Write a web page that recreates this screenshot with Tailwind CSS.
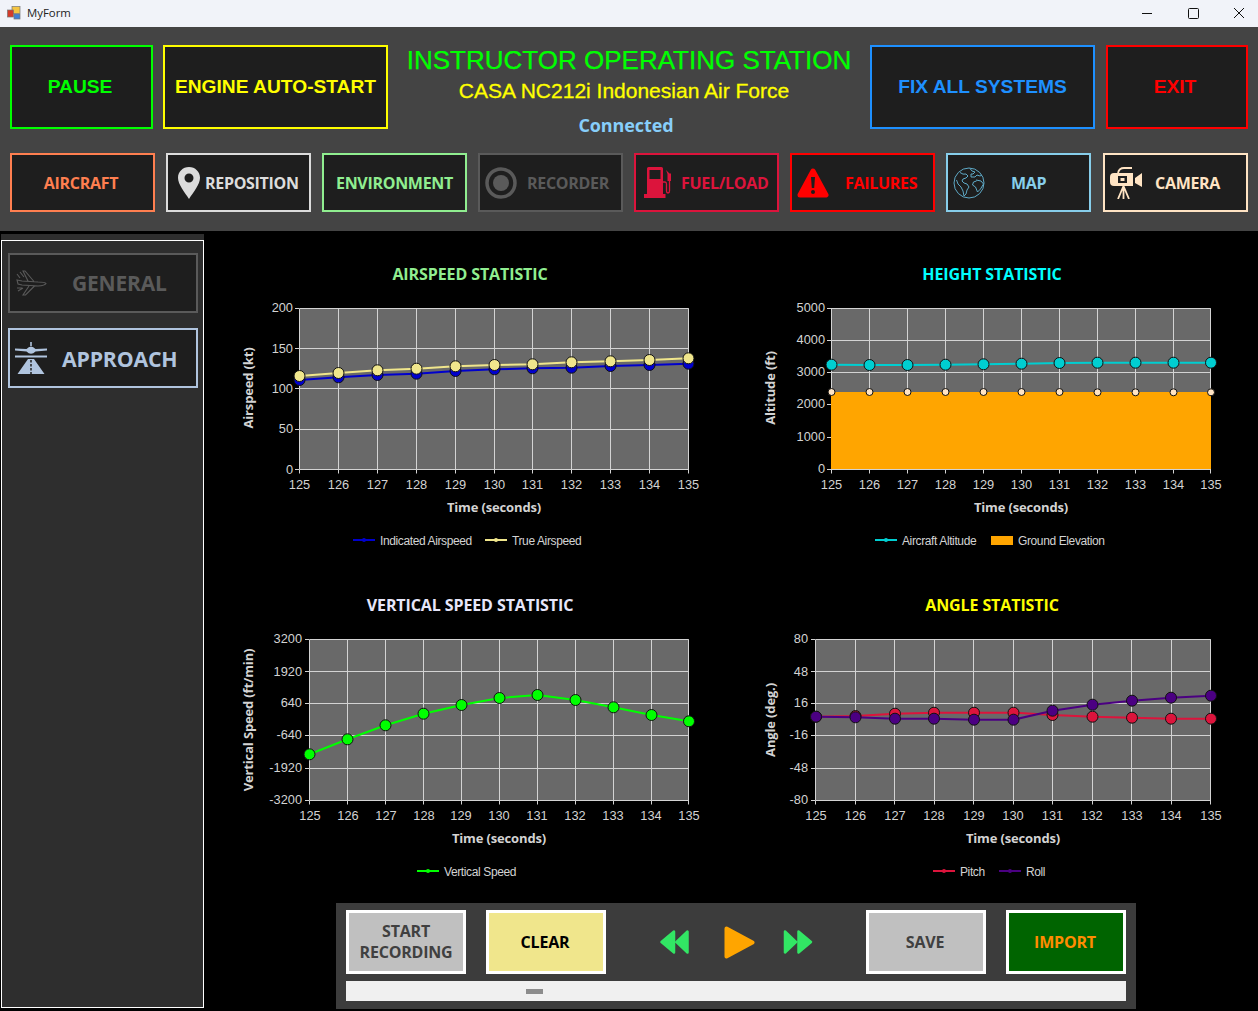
<!DOCTYPE html>
<html>
<head>
<meta charset="utf-8">
<script src="https://cdn.jsdelivr.net/npm/@tailwindcss/browser@4"></script>
</head>
<body class="bg-black overflow-hidden">
<div class="w-[1258px] h-[1011px] overflow-hidden flex flex-col bg-black font-['Open_Sans',sans-serif]">
  <!-- title bar -->
  <div class="h-[27px] bg-[#f1f3f9] flex items-center shrink-0 relative">
    <svg class="ml-[7px] mb-[2px] w-[14px] h-[14px]" viewBox="0 0 14 14"><rect x="5" y="0.5" width="8" height="7" fill="#f5c542" stroke="#777" stroke-width="0.7"/><rect x="0.5" y="4" width="6" height="7" fill="#d43a2a" stroke="#777" stroke-width="0.7"/><rect x="7" y="8" width="6" height="5" fill="#3f7fd6" stroke="#777" stroke-width="0.7"/></svg>
    <span class="ml-[6px] mb-[2px] text-[11.4px] text-[#222] font-['Open_Sans',sans-serif]">MyForm</span>
    <div class="ml-auto flex items-center h-full mr-[-4px]">
      <svg class="w-[46px] h-[24px]" viewBox="0 0 46 24"><path d="M18 11.500h10" stroke="#111" stroke-width="1"/></svg>
      <svg class="w-[46px] h-[24px]" viewBox="0 0 46 24"><rect x="18.500" y="6.500" width="10" height="10" rx="1" fill="none" stroke="#111"/></svg>
      <svg class="w-[46px] h-[24px]" viewBox="0 0 46 24"><path d="M18 6l10 10M28 6l-10 10" stroke="#111" stroke-width="1"/></svg>
    </div>
  </div>
  <!-- header -->
  <div class="h-[204px] bg-[#444444] shrink-0 px-[10px] pt-[18px]">
    <div class="flex h-[84px] font-['Liberation_Sans',sans-serif] font-bold text-[19.2px]">
      <div class="w-[143px] bg-[#1e1e1e] border-2 border-[#00ff00] text-[#00ff00] flex items-center justify-center pr-[3px]">PAUSE</div>
      <div class="w-[225px] ml-[10px] bg-[#1e1e1e] border-2 border-[#ffff00] text-[#ffff00] flex items-center justify-center whitespace-nowrap">ENGINE AUTO-START</div>
      <div class="flex-1 flex flex-col items-center font-normal">
        <div class="text-[26px] leading-[30px] text-[#00ff00] whitespace-nowrap [-webkit-text-stroke:0.25px_#00ff00]">INSTRUCTOR OPERATING STATION</div>
        <div class="text-[21px] leading-[26px] mt-[3px] text-[#ffff00] whitespace-nowrap [-webkit-text-stroke:0.3px_#ffff00] ml-[-10px]">CASA NC212i Indonesian Air Force</div>
        <div class="text-[18px] leading-[24px] mt-[9px] font-bold text-[#87cefa] font-['Open_Sans',sans-serif] ml-[-6px] tracking-[-0.1px]">Connected</div>
      </div>
      <div class="w-[225px] bg-[#1e1e1e] border-2 border-[#1e90ff] text-[#1e90ff] flex items-center justify-center whitespace-nowrap">FIX ALL SYSTEMS</div>
      <div class="w-[142px] ml-[11px] bg-[#1e1e1e] border-2 border-[#ff0000] text-[#ff0000] flex items-center justify-center pr-[4px]">EXIT</div>
    </div>
    <div class="flex gap-[11px] mt-[24px] w-[1238px] text-[16px] font-bold tracking-[-0.3px] font-['Open_Sans',sans-serif]">
      <div class="w-[145px] h-[59px] bg-[#1e1e1e] border-2 border-[#ff7f50] text-[#ff7f50] flex items-center justify-center pr-[3px]">AIRCRAFT</div>
      <div class="w-[145px] h-[59px] bg-[#1e1e1e] border-2 border-[#dcdcdc] text-[#dcdcdc] flex items-center pl-[10px]">
        <svg class="w-[22px] h-[32px] mr-[5px] shrink-0" viewBox="0 0 22 32"><path fill-rule="evenodd" fill="#dcdcdc" d="M11 0C4.800 0 0 4.800 0 10.800 0 17.500 6.500 25 11 32c4.500-7 11-14.500 11-21.200C22 4.800 17.200 0 11 0zm0 6.500a4.500 4.500 0 1 1 0 9 4.500 4.500 0 0 1 0-9z"/></svg>
        <span class="whitespace-nowrap">REPOSITION</span>
      </div>
      <div class="w-[145px] h-[59px] bg-[#1e1e1e] border-2 border-[#90ee90] text-[#90ee90] flex items-center justify-center whitespace-nowrap">ENVIRONMENT</div>
      <div class="w-[145px] h-[59px] bg-[#1e1e1e] border-2 border-[#5a5a5a] text-[#5a5a5a] flex items-center pl-[5px]">
        <svg class="w-[32px] h-[32px] mr-[10px] shrink-0" viewBox="0 0 32 32"><circle cx="16" cy="16" r="14" fill="none" stroke="#5a5a5a" stroke-width="3.500"/><circle cx="16" cy="16" r="8" fill="#5a5a5a"/></svg>
        <span class="whitespace-nowrap">RECORDER</span>
      </div>
      <div class="w-[145px] h-[59px] bg-[#1e1e1e] border-2 border-[#dc143c] text-[#dc143c] flex items-center pl-[8px]">
        <svg class="w-[28px] h-[32px] mr-[9px] shrink-0" viewBox="0 0 28 32"><path fill-rule="evenodd" fill="#dc143c" d="M3 1.500Q3 0 4.500 0h13Q19 0 19 1.500V27h2.500v4H0v-4h3zM5.500 3v9h11V3z"/><path d="M19 15h2q1.500 0 1.500 2v7q0 2 1.500 2t1.500-2V13" fill="none" stroke="#dc143c" stroke-width="1.300"/><path d="M22 3l3.500 3.500H27V14h-3.500V7z" fill="#dc143c"/></svg>
        <span class="whitespace-nowrap">FUEL/LOAD</span>
      </div>
      <div class="w-[145px] h-[59px] bg-[#1e1e1e] border-2 border-[#ff0000] text-[#ff0000] flex items-center pl-[5px]">
        <svg class="w-[32px] h-[30px] mr-[16px] shrink-0" viewBox="0 0 32 30"><path fill="#ff0000" stroke="#ff0000" stroke-width="5" stroke-linejoin="round" d="M16 3L29 27H3z"/><path d="M14 9h4l-.8 11h-2.400z" fill="#1e1e1e"/><circle cx="16" cy="24" r="2" fill="#1e1e1e"/></svg>
        <span class="whitespace-nowrap">FAILURES</span>
      </div>
      <div class="w-[145px] h-[59px] bg-[#1e1e1e] border-2 border-[#87ceeb] text-[#87ceeb] flex items-center pl-[5px]">
        <svg class="w-[32px] h-[32px] mr-[26px] shrink-0" viewBox="0 0 32 32" fill="none" stroke="#5ea9c6" stroke-width="1"><circle cx="16" cy="16" r="15"/><path d="M7 5.500Q10 8 13 7l2 2-2 2-3 1-1 2 2 2 3 1 2 3-2 3-1 4-2 2-1-5-2-4-3-3-1.500-4M17 1.500l2 2.500 3 1-2 2-2 0 0 3 4 0 2-2 3 1 2-1M23 13l5 1 2.500 3-3 5-3 3-2-5-3-2 1-3 3-1"/></svg>
        <span class="whitespace-nowrap">MAP</span>
      </div>
      <div class="w-[145px] h-[59px] bg-[#1e1e1e] border-2 border-[#ffe4c4] text-[#ffe4c4] flex items-center pl-[5px] ml-[1px]">
        <svg class="w-[32px] h-[32px] mr-[13px] shrink-0" viewBox="0 0 32 32"><path fill="#ffe4c4" fill-rule="evenodd" d="M0 10q0-4 4-4h19v13H4q-4 0-4-4zM8 9v7h9V9zM25 11l7-5v14l-7-4z"/><rect x="10.500" y="11" width="4" height="3" fill="#ffe4c4"/><path d="M8 6Q9 1 14 1h8" fill="none" stroke="#ffe4c4" stroke-width="1.800"/><path d="M13.500 19L8 32M13.500 19V32M13.500 19L19 32" stroke="#ffe4c4" stroke-width="1.800" fill="none"/></svg>
        <span class="whitespace-nowrap">CAMERA</span>
      </div>
    </div>
  </div>
  <!-- body -->
  <div class="flex-1 flex min-h-0">
    <div class="ml-[1px] w-[203px] h-[774px] mt-[3px] bg-[#2e2e2e] pt-[6px] shrink-0">
      <div class="h-[768px] border border-white pt-[12px] pl-[6px] flex flex-col gap-[15px]">
        <div class="w-[190px] h-[60px] bg-[#1e1e1e] border-2 border-[#5a5a5a] text-[#5a5a5a] flex items-center pl-[5px] font-bold text-[21px] tracking-[-0.2px]">
          <svg class="w-[32px] h-[26px] mr-[25px] shrink-0" viewBox="0 0 32 26" fill="none" stroke="#5a5a5a" stroke-width="1.100"><path d="M2 10l5 1 16 1q7 0 8 1.500-1 2-8 2.500L7 15 3 14zM13 11L8 1h2l9 10.500M14 16L8 25h2.500l9-9M2 4l3 4M5 2l4 5M2 18h5M3 21l5-3"/></svg>
          <span class="pt-[2px]">GENERAL</span>
        </div>
        <div class="w-[190px] h-[60px] bg-[#1e1e1e] border-2 border-[#b0c4de] text-[#b0c4de] flex items-center pl-[5px] font-bold text-[21.3px] tracking-[-0.2px]">
          <svg class="w-[32px] h-[32px] mr-[15px] shrink-0" viewBox="0 0 32 32"><path fill="#b0c4de" d="M15.200 0h1.600v4h-1.600zM0 6.500l11.500.5Q16 2 20.500 7L32 6.500v2l-11.500 1Q16 14 11.500 9.500L0 8.500zM0 13.500h32v2H0zM13 17h6l10.500 15H2.500z"/><path d="M16 18v14" stroke="#1e1e1e" stroke-width="1.500" stroke-dasharray="2.500 1.500"/></svg>
          <span class="pt-[2px]">APPROACH</span>
        </div>
      </div>
    </div>
    <div class="ml-[4px] flex-1 flex flex-col pt-[9px]">
      <div class="grid grid-cols-[522px_522px] grid-rows-[331px_331px] font-['Liberation_Sans',sans-serif]">
        <!-- AIRSPEED -->
        <svg width="522" height="331" viewBox="208 240 522 331">
          <text x="470" y="279.500" text-anchor="middle" class="font-['Open_Sans',sans-serif] font-bold text-[16px] tracking-[-0.1px] fill-[#90ee90]">AIRSPEED STATISTIC</text>
          <rect x="299.500" y="308.500" width="389" height="161" fill="#696969"/>
          <path fill="none" stroke="#d3d3d3" d="M299.500 308.500H688.500V469.500H299.500ZM295 308.500H299M295 348.500H688.500M295 388.500H688.500M295 429.500H688.500M295 469.500H299M338.500 308.500V473.500M377.500 308.500V473.500M416.500 308.500V473.500M455.500 308.500V473.500M494.500 308.500V473.500M532.500 308.500V473.500M571.500 308.500V473.500M610.500 308.500V473.500M649.500 308.500V473.500M688.500 308.500V473.500M299.500 469.500V473.500"/>
          <g class="text-[12.800px] fill-[#d3d3d3]" text-anchor="end"><text x="293" y="312">200</text><text x="293" y="353">150</text><text x="293" y="393">100</text><text x="293" y="433">50</text><text x="293" y="474">0</text></g>
          <g class="text-[12.800px] fill-[#d3d3d3]" text-anchor="middle"><text x="299.500" y="489">125</text><text x="338.500" y="489">126</text><text x="377.500" y="489">127</text><text x="416.500" y="489">128</text><text x="455.500" y="489">129</text><text x="494.500" y="489">130</text><text x="532.500" y="489">131</text><text x="571.500" y="489">132</text><text x="610.500" y="489">133</text><text x="649.500" y="489">134</text><text x="688.500" y="489">135</text></g>
          <text x="494" y="511.500" text-anchor="middle" class="font-['Open_Sans',sans-serif] font-bold text-[13px] tracking-[-0.150px] fill-[#d3d3d3]">Time (seconds)</text>
          <text transform="translate(253 388) rotate(-90)" text-anchor="middle" class="font-['Open_Sans',sans-serif] font-bold text-[13px] tracking-[-0.150px] fill-[#d3d3d3]">Airspeed (kt)</text>
          <polyline fill="none" stroke="#0000cd" stroke-width="2" points="299.500,380 338.500,377.300 377.500,375 416.500,373.700 455.500,371 494.500,369.300 532.500,368.300 571.500,367.700 610.500,366 649.500,365 688.500,363.700"/>
          <g fill="#0000cd" stroke="#111"><circle cx="299.500" cy="380" r="5.500"/><circle cx="338.500" cy="377.300" r="5.500"/><circle cx="377.500" cy="375" r="5.500"/><circle cx="416.500" cy="373.700" r="5.500"/><circle cx="455.500" cy="371" r="5.500"/><circle cx="494.500" cy="369.300" r="5.500"/><circle cx="532.500" cy="368.300" r="5.500"/><circle cx="571.500" cy="367.700" r="5.500"/><circle cx="610.500" cy="366" r="5.500"/><circle cx="649.500" cy="365" r="5.500"/><circle cx="688.500" cy="363.700" r="5.500"/></g>
          <polyline fill="none" stroke="#f0e68c" stroke-width="2" points="299.500,376 338.500,373 377.500,370.300 416.500,368.700 455.500,366.300 494.500,365 532.500,364.300 571.500,362.300 610.500,361.300 649.500,360 688.500,358.300"/>
          <g fill="#f0e68c" stroke="#111"><circle cx="299.500" cy="376" r="5.500"/><circle cx="338.500" cy="373" r="5.500"/><circle cx="377.500" cy="370.300" r="5.500"/><circle cx="416.500" cy="368.700" r="5.500"/><circle cx="455.500" cy="366.300" r="5.500"/><circle cx="494.500" cy="365" r="5.500"/><circle cx="532.500" cy="364.300" r="5.500"/><circle cx="571.500" cy="362.300" r="5.500"/><circle cx="610.500" cy="361.300" r="5.500"/><circle cx="649.500" cy="360" r="5.500"/><circle cx="688.500" cy="358.300" r="5.500"/></g>
          <path d="M353 540H375" stroke="#0000cd" stroke-width="2"/><circle cx="364" cy="540" r="2" fill="#0000cd"/>
          <text x="380" y="545" class="text-[12px] tracking-[-0.380px] fill-[#d3d3d3]">Indicated Airspeed</text>
          <path d="M485 540H507" stroke="#f0e68c" stroke-width="2"/><circle cx="496" cy="540" r="2" fill="#f0e68c"/>
          <text x="512" y="545" class="text-[12px] tracking-[-0.380px] fill-[#d3d3d3]">True Airspeed</text>
        </svg>
        <!-- HEIGHT -->
        <svg width="522" height="331" viewBox="730 240 522 331">
          <text x="992" y="279.500" text-anchor="middle" class="font-['Open_Sans',sans-serif] font-bold text-[16px] tracking-[-0.1px] fill-[#00ffff]">HEIGHT STATISTIC</text>
          <rect x="831.500" y="308.500" width="379" height="161" fill="#696969"/>
          <path fill="none" stroke="#d3d3d3" d="M827 308.500H1210.500V469.500M827 340.500H1210.500M827 372.500H1210.500M827 404.500H831M827 437.500H831M827 469.500H831M831.500 308.500V473.500M869.500 308.500V473.500M907.500 308.500V473.500M945.500 308.500V473.500M983.500 308.500V473.500M1021.500 308.500V473.500M1059.500 308.500V473.500M1097.500 308.500V473.500M1135.500 308.500V473.500M1173.500 308.500V473.500M1210.500 308.500V473.500"/>
          <rect x="831" y="392" width="380" height="77.500" fill="#ffa500"/>
          <path d="M831 469.500H1211" stroke="#d3d3d3"/>
          <g class="text-[12.800px] fill-[#d3d3d3]" text-anchor="end"><text x="825" y="312">5000</text><text x="825" y="344">4000</text><text x="825" y="376">3000</text><text x="825" y="408">2000</text><text x="825" y="441">1000</text><text x="825" y="473">0</text></g>
          <g class="text-[12.800px] fill-[#d3d3d3]" text-anchor="middle"><text x="831.500" y="489">125</text><text x="869.500" y="489">126</text><text x="907.500" y="489">127</text><text x="945.500" y="489">128</text><text x="983.500" y="489">129</text><text x="1021.500" y="489">130</text><text x="1059.500" y="489">131</text><text x="1097.500" y="489">132</text><text x="1135.500" y="489">133</text><text x="1173.500" y="489">134</text><text x="1211" y="489">135</text></g>
          <text x="1021" y="511.500" text-anchor="middle" class="font-['Open_Sans',sans-serif] font-bold text-[13px] tracking-[-0.150px] fill-[#d3d3d3]">Time (seconds)</text>
          <text transform="translate(775 388) rotate(-90)" text-anchor="middle" class="font-['Open_Sans',sans-serif] font-bold text-[13px] tracking-[-0.150px] fill-[#d3d3d3]">Altitude (ft)</text>
          <g fill="#ffe4c4" stroke="#111"><circle cx="831.500" cy="392" r="3.500"/><circle cx="869.500" cy="392" r="3.500"/><circle cx="907.500" cy="392" r="3.500"/><circle cx="945.500" cy="392" r="3.500"/><circle cx="983.500" cy="392" r="3.500"/><circle cx="1021.500" cy="392" r="3.500"/><circle cx="1059.500" cy="392" r="3.500"/><circle cx="1097.500" cy="392.300" r="3.500"/><circle cx="1135.500" cy="392.300" r="3.500"/><circle cx="1173.500" cy="392.300" r="3.500"/><circle cx="1211" cy="392.300" r="3.500"/></g>
          <polyline fill="none" stroke="#00ced1" stroke-width="2" points="831.500,364.700 869.500,365 907.500,365 945.500,364.700 983.500,364.300 1021.500,363.700 1059.500,363 1097.500,362.700 1135.500,362.700 1173.500,362.700 1211,362.700"/>
          <g fill="#00ced1" stroke="#111"><circle cx="831.500" cy="364.700" r="5.500"/><circle cx="869.500" cy="365" r="5.500"/><circle cx="907.500" cy="365" r="5.500"/><circle cx="945.500" cy="364.700" r="5.500"/><circle cx="983.500" cy="364.300" r="5.500"/><circle cx="1021.500" cy="363.700" r="5.500"/><circle cx="1059.500" cy="363" r="5.500"/><circle cx="1097.500" cy="362.700" r="5.500"/><circle cx="1135.500" cy="362.700" r="5.500"/><circle cx="1173.500" cy="362.700" r="5.500"/><circle cx="1211" cy="362.700" r="5.500"/></g>
          <path d="M875 540H897" stroke="#00ced1" stroke-width="2"/><circle cx="886" cy="540" r="2" fill="#00ced1"/>
          <text x="902" y="545" class="text-[12px] tracking-[-0.380px] fill-[#d3d3d3]">Aircraft Altitude</text>
          <rect x="991" y="536" width="22" height="9" fill="#ffa500"/>
          <text x="1018" y="545" class="text-[12px] tracking-[-0.380px] fill-[#d3d3d3]">Ground Elevation</text>
        </svg>
        <!-- VERTICAL SPEED -->
        <svg width="522" height="331" viewBox="208 571 522 331">
          <text x="470" y="610.500" text-anchor="middle" class="font-['Open_Sans',sans-serif] font-bold text-[16px] tracking-[-0.1px] fill-[#e6e6fa]">VERTICAL SPEED STATISTIC</text>
          <rect x="309.500" y="639.500" width="379" height="161" fill="#696969"/>
          <path fill="none" stroke="#d3d3d3" d="M309.500 639.500H688.500V800.500H309.500ZM305 639.500H309M305 671.500H688.500M305 703.500H688.500M305 735.500H688.500M305 768.500H688.500M305 800.500H309M347.500 639.500V804.500M385.500 639.500V804.500M423.500 639.500V804.500M461.500 639.500V804.500M499.500 639.500V804.500M537.500 639.500V804.500M575.500 639.500V804.500M613.500 639.500V804.500M651.500 639.500V804.500M688.500 639.500V804.500M309.500 800.500V804.500"/>
          <g class="text-[12.800px] fill-[#d3d3d3]" text-anchor="end"><text x="302" y="642.500">3200</text><text x="302" y="675.500">1920</text><text x="302" y="707">640</text><text x="302" y="739">-640</text><text x="302" y="772">-1920</text><text x="302" y="804">-3200</text></g>
          <g class="text-[12.800px] fill-[#d3d3d3]" text-anchor="middle"><text x="310" y="820">125</text><text x="348" y="820">126</text><text x="386" y="820">127</text><text x="424" y="820">128</text><text x="461" y="820">129</text><text x="499" y="820">130</text><text x="537" y="820">131</text><text x="575" y="820">132</text><text x="613" y="820">133</text><text x="651" y="820">134</text><text x="689" y="820">135</text></g>
          <text x="499" y="842.500" text-anchor="middle" class="font-['Open_Sans',sans-serif] font-bold text-[13px] tracking-[-0.150px] fill-[#d3d3d3]">Time (seconds)</text>
          <text transform="translate(253 720) rotate(-90)" text-anchor="middle" class="font-['Open_Sans',sans-serif] font-bold text-[13px] tracking-[-0.150px] fill-[#d3d3d3]">Vertical Speed (ft/min)</text>
          <polyline fill="none" stroke="#00ff00" stroke-width="2" points="309.500,754.300 347.500,739.300 385.500,725.300 423.500,713.700 461.500,705 499.500,698 537.500,695 575.500,700 613.500,707.300 651.500,715 689,721.300"/>
          <g fill="#00ff00" stroke="#111"><circle cx="309.500" cy="754.300" r="5.500"/><circle cx="347.500" cy="739.300" r="5.500"/><circle cx="385.500" cy="725.300" r="5.500"/><circle cx="423.500" cy="713.700" r="5.500"/><circle cx="461.500" cy="705" r="5.500"/><circle cx="499.500" cy="698" r="5.500"/><circle cx="537.500" cy="695" r="5.500"/><circle cx="575.500" cy="700" r="5.500"/><circle cx="613.500" cy="707.300" r="5.500"/><circle cx="651.500" cy="715" r="5.500"/><circle cx="689" cy="721.300" r="5.500"/></g>
          <path d="M417 871H439" stroke="#00ff00" stroke-width="2"/><circle cx="428" cy="871" r="2" fill="#00ff00"/>
          <text x="444" y="876" class="text-[12px] tracking-[-0.380px] fill-[#d3d3d3]">Vertical Speed</text>
        </svg>
        <!-- ANGLE -->
        <svg width="522" height="331" viewBox="730 571 522 331">
          <text x="992" y="610.500" text-anchor="middle" class="font-['Open_Sans',sans-serif] font-bold text-[16px] tracking-[-0.1px] fill-[#ffff00]">ANGLE STATISTIC</text>
          <rect x="815.500" y="639.500" width="395" height="161" fill="#696969"/>
          <path fill="none" stroke="#d3d3d3" d="M815.500 639.500H1210.500V800.500H815.500ZM811 639.500H815M811 671.500H1210.500M811 703.500H1210.500M811 735.500H1210.500M811 768.500H1210.500M811 800.500H815M855.500 639.500V804.500M894.500 639.500V804.500M934.500 639.500V804.500M973.500 639.500V804.500M1013.500 639.500V804.500M1052.500 639.500V804.500M1092.500 639.500V804.500M1131.500 639.500V804.500M1171.500 639.500V804.500M1210.500 639.500V804.500M815.500 800.500V804.500"/>
          <g class="text-[12.800px] fill-[#d3d3d3]" text-anchor="end"><text x="808" y="642.500">80</text><text x="808" y="675.500">48</text><text x="808" y="707">16</text><text x="808" y="739">-16</text><text x="808" y="772">-48</text><text x="808" y="804">-80</text></g>
          <g class="text-[12.800px] fill-[#d3d3d3]" text-anchor="middle"><text x="816" y="820">125</text><text x="855.500" y="820">126</text><text x="895" y="820">127</text><text x="934" y="820">128</text><text x="974" y="820">129</text><text x="1013" y="820">130</text><text x="1052.500" y="820">131</text><text x="1092" y="820">132</text><text x="1132" y="820">133</text><text x="1171" y="820">134</text><text x="1211" y="820">135</text></g>
          <text x="1013" y="842.500" text-anchor="middle" class="font-['Open_Sans',sans-serif] font-bold text-[13px] tracking-[-0.150px] fill-[#d3d3d3]">Time (seconds)</text>
          <text transform="translate(775 720) rotate(-90)" text-anchor="middle" class="font-['Open_Sans',sans-serif] font-bold text-[13px] tracking-[-0.150px] fill-[#d3d3d3]">Angle (deg.)</text>
          <polyline fill="none" stroke="#dc143c" stroke-width="2" points="816,716.700 855.500,716 895,713.700 934,712.700 974,712.700 1013.500,712.700 1052.500,715 1092.500,716.700 1132,717.700 1171,718.700 1211,718.700"/>
          <g fill="#dc143c" stroke="#111"><circle cx="816" cy="716.700" r="5.500"/><circle cx="855.500" cy="716" r="5.500"/><circle cx="895" cy="713.700" r="5.500"/><circle cx="934" cy="712.700" r="5.500"/><circle cx="974" cy="712.700" r="5.500"/><circle cx="1013.500" cy="712.700" r="5.500"/><circle cx="1052.500" cy="715" r="5.500"/><circle cx="1092.500" cy="716.700" r="5.500"/><circle cx="1132" cy="717.700" r="5.500"/><circle cx="1171" cy="718.700" r="5.500"/><circle cx="1211" cy="718.700" r="5.500"/></g>
          <polyline fill="none" stroke="#4b0082" stroke-width="2" points="816,716.700 855.500,717.300 895,718.700 934,718.700 974,719.700 1013.500,719.700 1052.500,710.700 1092.500,704.700 1132,700.700 1171,697.700 1211,695.700"/>
          <g fill="#4b0082" stroke="#111"><circle cx="816" cy="716.700" r="5.500"/><circle cx="855.500" cy="717.300" r="5.500"/><circle cx="895" cy="718.700" r="5.500"/><circle cx="934" cy="718.700" r="5.500"/><circle cx="974" cy="719.700" r="5.500"/><circle cx="1013.500" cy="719.700" r="5.500"/><circle cx="1052.500" cy="710.700" r="5.500"/><circle cx="1092.500" cy="704.700" r="5.500"/><circle cx="1132" cy="700.700" r="5.500"/><circle cx="1171" cy="697.700" r="5.500"/><circle cx="1211" cy="695.700" r="5.500"/></g>
          <path d="M933 871H955" stroke="#dc143c" stroke-width="2"/><circle cx="944" cy="871" r="2" fill="#dc143c"/>
          <text x="960" y="876" class="text-[12px] tracking-[-0.380px] fill-[#d3d3d3]">Pitch</text>
          <path d="M999 871H1021" stroke="#4b0082" stroke-width="2"/><circle cx="1010" cy="871" r="2" fill="#4b0082"/>
          <text x="1026" y="876" class="text-[12px] tracking-[-0.380px] fill-[#d3d3d3]">Roll</text>
        </svg>
      </div>
      <!-- recorder panel -->
      <div class="ml-[128px] mt-[1px] w-[800px] h-[106px] bg-[#3c3c3c] px-[10px] pt-[7px]">
        <div class="flex h-[64px] text-[16px] font-bold tracking-[-0.2px] leading-[21px] text-center">
          <div class="w-[120px] bg-[#c0c0c0] border-[3px] border-white text-[#404040] flex items-center justify-center">START<br>RECORDING</div>
          <div class="w-[120px] ml-[20px] bg-[#f0e68c] border-[3px] border-white text-black flex items-center justify-center pr-[2px]">CLEAR</div>
          <div class="w-[260px] relative flex items-center">
            <svg class="w-[30px] h-[26px] ml-[54px] mr-[34px]" viewBox="0 0 30 26"><path fill="#32e664" stroke="#32e664" stroke-width="2.500" stroke-linejoin="round" d="M1.500 13L14 2.500v21zM16.500 13L27.500 2.500v21z"/></svg>
            <svg class="w-[31px] h-[33px] mr-[28px]" viewBox="0 0 31 33"><path fill="#ffa500" stroke="#ffa500" stroke-width="4" stroke-linejoin="round" d="M2.500 2.500L28.500 16.500 2.500 30.500z"/></svg>
            <svg class="w-[30px] h-[26px]" viewBox="0 0 30 26"><path fill="#32e664" stroke="#32e664" stroke-width="2.500" stroke-linejoin="round" d="M2 2.500L13 13 2 23.500zM15.500 2.500L28 13 15.500 23.500z"/></svg>
          </div>
          <div class="w-[120px] bg-[#c0c0c0] border-[3px] border-white text-[#404040] flex items-center justify-center pr-[2px]">SAVE</div>
          <div class="w-[120px] ml-[20px] bg-[#006400] border-[3px] border-white text-[#ff8c00] flex items-center justify-center pr-[2px]">IMPORT</div>
        </div>
        <div class="mt-[7px] h-[20px] w-[780px] bg-[#f0f0f0] flex items-center pl-[180px]">
          <div class="w-[17px] h-[5px] bg-[#8c8c8c]"></div>
        </div>
      </div>
    </div>
  </div>
</div>
</body>
</html>
